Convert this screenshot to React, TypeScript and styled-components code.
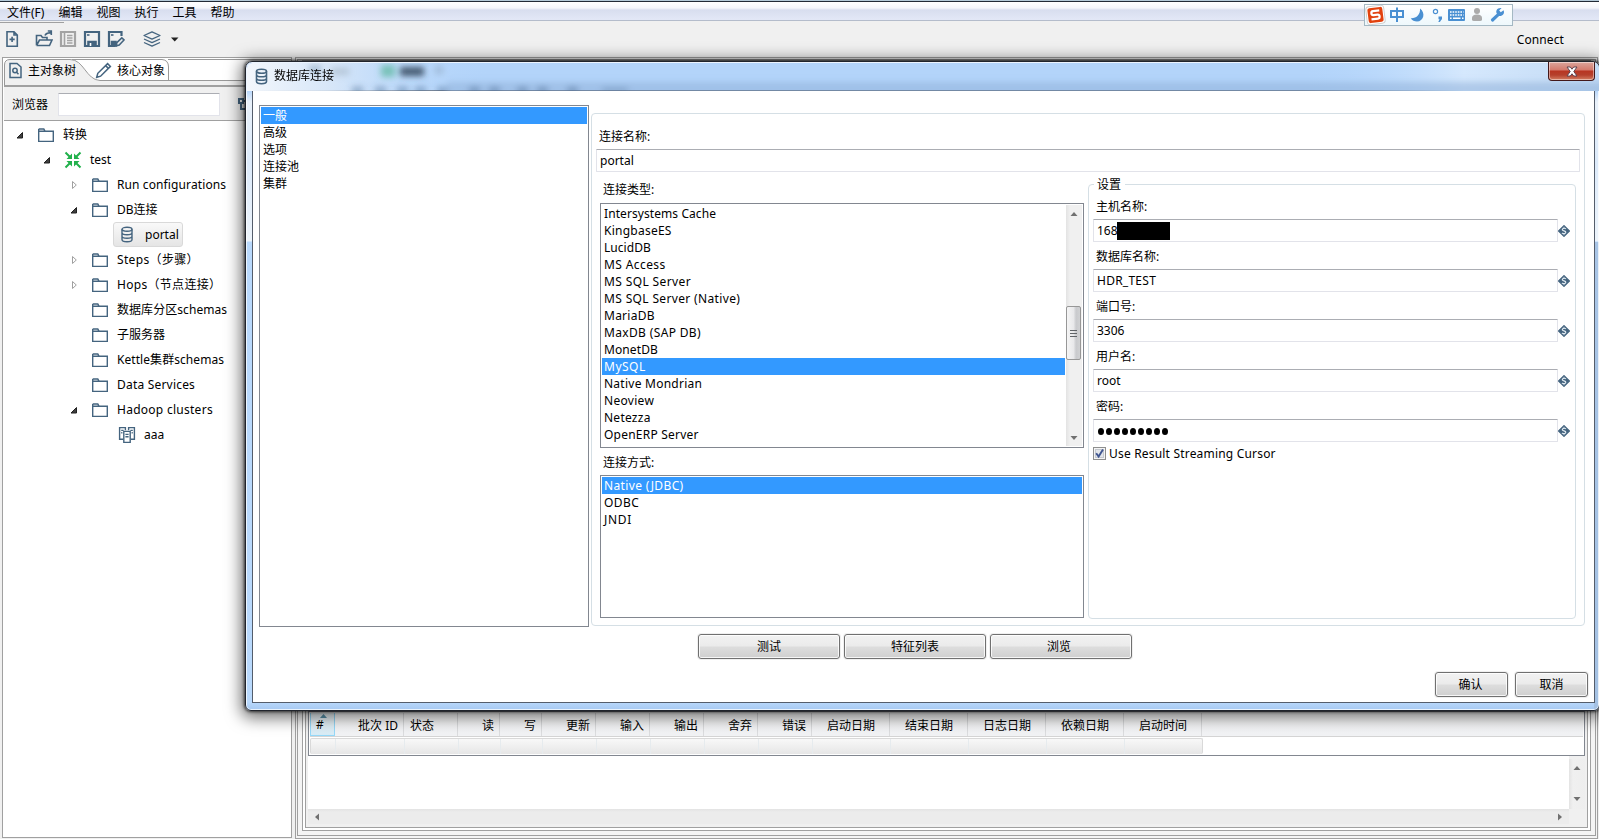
import React from "react";
import styled, { createGlobalStyle, css } from "styled-components";

const GlobalStyle = createGlobalStyle`
  * { box-sizing: border-box; }
  html, body { margin: 0; padding: 0; overflow: hidden; }
  body {
    font-family: "Noto Sans", "Noto Sans CJK SC", sans-serif;
    font-size: 12px;
    line-height: 17px;
    color: #000;
    white-space: nowrap;
  }
`;

const INK = "#44647f";

/* ---------- application window ---------- */

const Window = styled.div`
  position: relative;
  width: 1599px;
  height: 839px;
  display: flex;
  flex-direction: column;
  background: #f0f0f0;
  overflow: hidden;
`;

const TitleEdge = styled.div`
  height: 2px;
  flex: none;
  background: linear-gradient(#b4cad8 0 1px, #222b36 1px 2px);
`;

const MenuBar = styled.nav`
  height: 19px;
  flex: none;
  display: flex;
  align-items: center;
  gap: 14px;
  padding: 2px 0 0 7px;
  background: linear-gradient(#fff 0, #f4f6fb 6px, #d8deef 8px, #e2e7f6 17px);
  border-bottom: 1px solid #b4bccb;
`;

const Toolbar = styled.div`
  height: 36px;
  flex: none;
  display: flex;
  align-items: center;
  padding: 0 35px 0 5px;
  background: linear-gradient(90deg, #a0a0a0 64px, transparent 64px) 0 1px / 100% 1px no-repeat, #f0f0f0;
`;

const ToolIcon = styled.svg<{ $gap: number }>`
  width: 18px;
  height: 18px;
  flex: none;
  margin-left: ${(p) => p.$gap}px;
  fill: none;
  stroke: ${INK};
  stroke-width: 1.6;
`;

const Connect = styled.span`
  margin-left: auto;
  letter-spacing: 0.1px;
`;

const Workspace = styled.div`
  flex: 1;
  min-height: 0;
  display: flex;
  gap: 3px;
  padding: 0 1px 0 2px;
`;

/* ---------- explorer ---------- */

const Explorer = styled.aside`
  width: 290px;
  flex: none;
  margin-bottom: 1px;
  display: flex;
  flex-direction: column;
  border: 1px solid #a0a0a0;
  background: #fff;
`;

const TabStrip = styled.div`
  position: relative;
  height: 29px;
  flex: none;
  margin-left: 1px;
  background: #fff;
`;

const TabShape = styled.svg`
  position: absolute;
  inset: 0;
  width: 287px;
  height: 29px;
`;

const TabLabels = styled.div`
  position: relative;
  display: flex;
  align-items: center;
  height: 24px;
  padding-left: 4px;
`;

const TabLabel = styled.span<{ $w: number }>`
  width: ${(p) => p.$w}px;
  display: flex;
  align-items: center;
  gap: 5px;
  svg { width: 15px; height: 17px; flex: none; }
`;

const SearchRow = styled.div`
  height: 34px;
  flex: none;
  margin-left: 1px;
  display: flex;
  align-items: center;
  padding: 2px 0 0 8px;
  background: #f0f0f0;
  border-bottom: 1px solid #a0a0a0;
`;

const SearchField = styled.div`
  width: 162px;
  height: 23px;
  margin: 0 18px 0 10px;
  background: #fff;
  border: 1px solid #e2e3ea;
  border-top-color: #abadb3;
  border-radius: 1px;
`;

const Tree = styled.div`
  flex: 1;
  padding-top: 1px;
`;

const Row = styled.div<{ $level: number }>`
  height: 25px;
  display: flex;
  align-items: center;
  padding-left: ${(p) => 13 + p.$level * 27}px;
`;

const Twist = styled.svg`
  width: 8px;
  height: 8px;
  flex: none;
`;

const NodeIcon = styled.svg`
  width: 18px;
  height: 18px;
  flex: none;
  margin: 0 8px 0 13px;
  fill: none;
  stroke: ${INK};
  stroke-width: 1.4;
`;

const NodeLabel = styled.span<{ $picked?: boolean; $child?: boolean; $track?: number }>`
  display: flex;
  align-items: center;
  letter-spacing: ${(p) => p.$track ?? 0}px;
  ${(p) => p.$child && css`margin-left: 27px;`}
  ${(p) =>
    p.$picked &&
    css`
      margin-left: 35px;
      height: 25px;
      padding-right: 3px;
      border: 1px solid #d9d9d9;
      border-radius: 3px;
      background: linear-gradient(#f9f9f9, #e5e5e5);
      ${NodeIcon} { margin: 0 9px 0 4px; }
    `}
`;

/* ---------- results panel ---------- */

const Results = styled.section`
  flex: 1;
  min-width: 0;
  display: flex;
  border: 1px solid #a0a0a0;
  padding: 1px 1px 2px;
  background: #f4f4f4;
`;

const Ring1 = styled.div`
  flex: 1;
  min-width: 0;
  display: flex;
  padding: 0 4px 4px;
  border: 1px solid #a0a0a0;
  background: #f4f4f4;
`;

const Ring2 = styled.div`
  flex: 1;
  min-width: 0;
  display: flex;
  padding: 0 2px 2px;
  border: 1px solid #a0a0a0;
  background: #fff;
`;

const Ring3 = styled.div`
  flex: 1;
  min-width: 0;
  display: flex;
  flex-direction: column;
  padding: 649px 2px 2px;
  border: 1px solid #a0a0a0;
  background: #f0f0f0;
`;

const Grid = styled.div`
  height: 45px;
  flex: none;
  padding: 1px;
  border: 1px solid #828790;
  background: #fff;
`;

const HeadRow = styled.div`
  display: flex;
  height: 24px;
  background: linear-gradient(#fff, #f2f3f5 20px);
  border-bottom: 1px solid #d5d5d5;
`;

const HeadCell = styled.div<{ $w: number; $align: string; $sorted?: boolean }>`
  position: relative;
  width: ${(p) => p.$w}px;
  flex: none;
  padding: 4px 5px 0 6px;
  text-align: ${(p) => p.$align};
  border-right: 1px solid #dcdddf;
  ${(p) =>
    p.$sorted &&
    css`
      padding-top: 3px;
      padding-left: 5px;
      border: 1px solid #96d9f9;
      border-top: 0;
      background: linear-gradient(#f2f9fc, #d8ecf6);
    `}
`;

const SortMark = styled.svg`
  position: absolute;
  left: 9px;
  top: 1px;
  width: 7px;
  height: 4px;
`;

const BlankRow = styled.div`
  display: flex;
  width: 893px;
  height: 16px;
  margin-top: 1px;
  border: 1px solid #d9d9d9;
  border-bottom: 0;
  border-radius: 2px;
  background: linear-gradient(#f8f8f8, #e6e6e6);
`;

const BlankCell = styled.div<{ $w: number }>`
  width: ${(p) => p.$w}px;
  flex: none;
  border-right: 1px solid #e6ebee;
`;

const LogArea = styled.div`
  height: 70px;
  display: grid;
  grid-template-columns: 1fr 16px;
  grid-template-rows: 53px 15px;
`;

const LogText = styled.div`
  background: #fff;
`;

const Track = styled.div<{ $horizontal?: boolean }>`
  display: flex;
  flex-direction: ${(p) => (p.$horizontal ? "row" : "column")};
  justify-content: space-between;
  align-items: center;
  padding: ${(p) => (p.$horizontal ? "0 5px" : "5px 0 6px")};
  background: ${(p) => (p.$horizontal ? "linear-gradient(#e3e3e3,#ececec 3px,#ececec)" : "linear-gradient(90deg,#e3e3e3,#f0f0f0 4px,#eee)")};
  margin-top: ${(p) => (p.$horizontal ? 0 : "3px")};
`;

/* ---------- input method bar ---------- */

const ImeBar = styled.div`
  position: absolute;
  left: 1364px;
  top: 4px;
  width: 149px;
  height: 22px;
  border: 1px solid #a4b8c3;
  background: linear-gradient(#fff, #eef8fc);
  svg { display: block; }
`;

/* ---------- dialog ---------- */

const Dialog = styled.div`
  position: absolute;
  left: 245px;
  top: 61px;
  width: 1355px;
  height: 650px;
  display: flex;
  flex-direction: column;
  padding: 0 4px 7px 6px;
  border: 1px solid #20242c;
  border-radius: 7px 7px 6px 6px;
  background:
    linear-gradient(#a9c5e6, #a3c0e2) 100% 180px / 5px 100% no-repeat,
    linear-gradient(#b3d4fa 0, #b3d4fa 28px, #e9f1fa 40px, #dceafa 100px, #edf4fb 179px, #b9d9fc 180px, #b9d9fc 640px, #a6c8f0 648px);
  box-shadow: inset 0 0 0 1px rgba(255, 255, 255, 0.75), 0 0 3px 1px rgba(0, 0, 0, 0.65), 0 3px 16px 4px rgba(0, 0, 0, 0.55);
`;

const Glass = styled.svg`
  position: absolute;
  left: 1px;
  top: 1px;
  width: 1352px;
  height: 28px;
`;

const TitleBar = styled.header`
  position: relative;
  height: 28px;
  flex: none;
  display: flex;
  align-items: center;
  padding-left: 3px;
  gap: 6px;
  span { padding-bottom: 2px; }
  svg { width: 13px; height: 17px; fill: none; stroke: ${INK}; stroke-width: 1.6; }
`;

const CloseButton = styled.div`
  align-self: flex-start;
  margin-left: auto;
  width: 47px;
  height: 19px;
  display: flex;
  align-items: center;
  justify-content: center;
  border: 1px solid #43181a;
  border-top: 0;
  border-radius: 0 0 4px 4px;
  background: linear-gradient(#dba59c 0, #d3796c 8px, #b83522 9px, #b5402c 13px, #da8a6d 19px);
  box-shadow: inset 0 0 0 1px rgba(255, 255, 255, 0.45);
`;

const Client = styled.div`
  flex: 1;
  min-height: 0;
  display: flex;
  flex-direction: column;
  padding: 14px 6px 6px 6px;
  border: 1px solid #545d6b;
  background: #fff;
`;

const Columns = styled.div`
  display: flex;
  gap: 2px;
  height: 522px;
`;

const ListBox = styled.div<{ $w: number; $h: number }>`
  width: ${(p) => p.$w}px;
  height: ${(p) => p.$h}px;
  flex: none;
  display: flex;
  padding: 1px;
  border: 1px solid #828790;
  background: #fff;
`;

const Options = styled.div`
  flex: 1;
  min-width: 0;
`;

const Option = styled.div<{ $on?: boolean; $track?: number }>`
  height: 17px;
  padding-left: 2px;
  line-height: 17px;
  letter-spacing: ${(p) => p.$track ?? 0}px;
  color: ${(p) => (p.$on ? "#fff" : "#000")};
  background: ${(p) => (p.$on ? "#3399ff" : "transparent")};
`;

const ScrollBar = styled.div`
  width: 17px;
  flex: none;
  display: flex;
  flex-direction: column;
  align-items: center;
  padding: 5px 0 4px;
  background: linear-gradient(90deg, #fff 1px, #e3e3e3 1px, #f0f0f0 5px, #f0f0f0);
`;

const Thumb = styled.div`
  width: 15px;
  height: 54px;
  margin: 88px 0 auto;
  display: flex;
  align-items: center;
  justify-content: center;
  border: 1px solid #979797;
  border-radius: 2px;
  background: linear-gradient(90deg, #f5f5f5, #e9e9eb 50%, #c9cacd 70%, #d0d1d3);
`;

const Group = styled.div`
  width: 994px;
  height: 513px;
  margin-top: 8px;
  padding: 14px 4px 0;
  border: 1px solid #d5dfe5;
  border-radius: 4px;
`;

const FieldLabel = styled.div`
  height: 17px;
  padding-left: 3px;
`;

const Field = styled.div<{ $w: number; $track?: number }>`
  position: relative;
  width: ${(p) => p.$w}px;
  height: 23px;
  flex: none;
  padding: 2px 0 0 3px;
  letter-spacing: ${(p) => p.$track ?? 0}px;
  border: 1px solid #e2e3ea;
  border-top-color: #abadb3;
  border-radius: 1px;
  background: #fff;
`;

const Halves = styled.div`
  display: flex;
  gap: 4px;
  margin-top: 9px;
`;

const Left = styled.div`
  width: 488px;
  padding-left: 4px;
  flex: none;
`;

const Settings = styled.div`
  width: 488px;
  height: 435px;
  margin-top: 3px;
  padding: 0 4px;
  border: 1px solid #d5dfe5;
  border-radius: 4px;
`;

const Legend = styled.div`
  width: 31px;
  height: 17px;
  margin: -9px 0 5px 1px;
  padding-left: 3px;
  background: #fff;
`;

const FieldBlock = styled.div`
  height: 50px;
`;

const FieldLine = styled.div`
  display: flex;
  align-items: center;
  margin-top: 4px;
`;

const Redaction = styled.span`
  position: absolute;
  left: 23px;
  top: 2px;
  width: 53px;
  height: 18px;
  background: #000;
`;

const Dots = styled.span`
  display: flex;
  gap: 2px;
  padding: 6px 0 0 1px;
  i { width: 6px; height: 7px; border-radius: 50%; background: #000; }
`;

const CheckLine = styled.div`
  display: flex;
  align-items: center;
  gap: 3px;
  margin-top: -3px;
  letter-spacing: 0.19px;
  svg { width: 13px; height: 13px; }
`;

const Buttons = styled.div<{ $end?: boolean }>`
  display: flex;
  justify-content: ${(p) => (p.$end ? "flex-end" : "flex-start")};
  gap: ${(p) => (p.$end ? 7 : 4)}px;
  padding-left: ${(p) => (p.$end ? 0 : 439)}px;
  margin-top: ${(p) => (p.$end ? 13 : 7)}px;
`;

const Button = styled.div<{ $w: number; $pull?: number }>`
  width: ${(p) => p.$w}px;
  height: 25px;
  display: flex;
  align-items: center;
  justify-content: center;
  padding-right: ${(p) => p.$pull ?? 0}px;
  border: 1px solid #707070;
  border-radius: 3px;
  background: linear-gradient(#f2f2f2 0, #ebebeb 11px, #dddddd 12px, #cfcfcf 100%);
  box-shadow: inset 0 0 0 1px rgba(255, 255, 255, 0.8), 0 0 0 1px #f0f0f0;
`;

/* ---------- glyphs ---------- */

const Database = () => (
  <>
    <ellipse cx="6.5" cy="3.2" rx="5" ry="2" />
    <path d="M1.5 3.2v10.3c0 1.2 2.2 2.2 5 2.2s5-1 5-2.2V3.2M1.5 6.8c0 1.1 2.2 2 5 2s5-.9 5-2M1.5 10.2c0 1.1 2.2 2 5 2s5-.9 5-2" />
  </>
);

const FolderGlyph = () => <path d="M1.7 3V15.4H16.3V5.2H8L6.8 3H1.7M1.7 5.2H8" />;

const TransGlyph = () => (
  <g stroke="#22b14c" strokeWidth="2">
    <path d="M1.5 1.5l5 5M16.5 1.5l-5 5M1.500 16.500l5-5M16.500 16.500l-5-5" />
    <path d="M2.500 8H8V2.500ZM15.500 8H10V2.500ZM2.500 10H8V15.500ZM15.500 10H10V15.500Z" fill="#22b14c" stroke="none" />
  </g>
);

const ClusterGlyph = () => (
  <g>
    <path d="M5.4 13.2H1.6V1.6H7.4V4.2M12.6 13.2H16.4V1.6H10.6V4.2M3.2 4.4H5.6M12.4 4.4H14.8M3.2 6.8H4.4M13.6 6.8H14.8" />
    <path d="M5.8 5.4H12.2V16.4H5.8ZM7.4 8.4H10.6M7.4 10.8H10.6" fill="#fff" />
  </g>
);

const Arrow = ({ dir }: { dir: "up" | "down" | "left" | "right" }) => {
  const d = {
    up: "M.5 6L4 2L7.5 6Z",
    down: "M.5 2L4 6L7.5 2Z",
    left: "M6 .5L2 4L6 7.5Z",
    right: "M2 .5L6 4L2 7.5Z",
  }[dir];
  return (
    <svg width="8" height="8" viewBox="0 0 8 8">
      <path d={d} fill="#707070" />
    </svg>
  );
};

const VariableMark = () => (
  <svg width="12" height="12" viewBox="0 0 12 12">
    <path d="M6 .6L11.400 6L6 11.400L.6 6Z" fill={INK} stroke={INK} strokeWidth="1.200" strokeLinejoin="round" />
    <path d="M7.900 3.900C6.800 2.900 4.200 3.100 4.300 4.600C4.400 6.200 7.800 5.600 7.800 7.300C7.800 8.900 5.100 9 4 8" fill="none" stroke="#dfe8ef" strokeWidth="1.200" />
    <path d="M6 1.800V3.200M6 8.800V10.200" stroke="#dfe8ef" strokeWidth=".8" />
  </svg>
);

/* ---------- data ---------- */

type TreeNode = {
  level: number;
  label: string;
  icon: "folder" | "trans" | "db" | "cluster";
  state: "open" | "closed" | "leaf";
  track?: number;
};

const tree: TreeNode[] = [
  { level: 0, label: "转换", icon: "folder", state: "open" },
  { level: 1, label: "test", icon: "trans", state: "open" },
  { level: 2, label: "Run configurations", icon: "folder", state: "closed", track: 0.11 },
  { level: 2, label: "DB连接", icon: "folder", state: "open" },
  { level: 3, label: "portal", icon: "db", state: "leaf" },
  { level: 2, label: "Steps（步骤）", icon: "folder", state: "closed", track: 0.35 },
  { level: 2, label: "Hops（节点连接）", icon: "folder", state: "closed", track: 0.3 },
  { level: 2, label: "数据库分区schemas", icon: "folder", state: "leaf", track: 0.06 },
  { level: 2, label: "子服务器", icon: "folder", state: "leaf" },
  { level: 2, label: "Kettle集群schemas", icon: "folder", state: "leaf", track: 0.06 },
  { level: 2, label: "Data Services", icon: "folder", state: "leaf", track: 0.2 },
  { level: 2, label: "Hadoop clusters", icon: "folder", state: "open", track: 0.27 },
  { level: 3, label: "aaa", icon: "cluster", state: "leaf" },
];

const columns: [string, number, string][] = [
  ["#", 25, "left"],
  ["批次 ID", 69, "right"],
  ["状态", 54, "left"],
  ["读", 42, "right"],
  ["写", 42, "right"],
  ["更新", 54, "right"],
  ["输入", 54, "right"],
  ["输出", 54, "right"],
  ["舍弃", 54, "right"],
  ["错误", 54, "right"],
  ["启动日期", 78, "center"],
  ["结束日期", 78, "center"],
  ["日志日期", 78, "center"],
  ["依赖日期", 78, "center"],
  ["启动时间", 78, "center"],
];

const sections = ["一般", "高级", "选项", "连接池", "集群"];

const databases: [string, number][] = [
  ["Intersystems Cache", 0.08],
  ["KingbaseES", 0.25],
  ["LucidDB", 0.05],
  ["MS Access", 0.4],
  ["MS SQL Server", 0.38],
  ["MS SQL Server (Native)", 0.35],
  ["MariaDB", 0.25],
  ["MaxDB (SAP DB)", 0.35],
  ["MonetDB", 0.1],
  ["MySQL", 0.5],
  ["Native Mondrian", 0.25],
  ["Neoview", 0.3],
  ["Netezza", 0.25],
  ["OpenERP Server", 0.22],
];

const accessModes: [string, number][] = [
  ["Native (JDBC)", 0.35],
  ["ODBC", 0.4],
  ["JNDI", 0.7],
];

const settings: [string, React.ReactNode][] = [
  ["主机名称:", <>168<Redaction /></>],
  ["数据库名称:", "HDR_TEST"],
  ["端口号:", "3306"],
  ["用户名:", "root"],
  ["密码:", <Dots>{Array.from({ length: 9 }, (_, i) => <i key={i} />)}</Dots>],
];

const glyphs = { folder: FolderGlyph, trans: TransGlyph, db: Database, cluster: ClusterGlyph };

function TreeRow({ node }: { node: TreeNode }) {
  const Glyph = glyphs[node.icon];
  return (
    <Row $level={Math.min(node.level, 2)}>
      <Twist viewBox="0 0 8 8">
        {node.state === "open" && <path d="M6.5 1.5V7H1Z" fill="#404040" stroke="#202020" />}
        {node.state === "closed" && <path d="M2.5 .5L6.3 4L2.5 7.5Z" fill="#fff" stroke="#a0a0a0" />}
      </Twist>
      <NodeLabel $picked={node.icon === "db"} $child={node.level === 3} $track={node.track}>
        <NodeIcon viewBox={node.icon === "db" ? "-2.5 0 18 18" : "0 0 18 18"}>
          <Glyph />
        </NodeIcon>
        {node.label}
      </NodeLabel>
    </Row>
  );
}

function MainToolbar() {
  return (
    <Toolbar>
      <ToolIcon $gap={0} viewBox="0 0 18 18">
        <path d="M2 1.800H9L12.300 5V16.200H2ZM9 2V5H12M7.100 6.800V12M4.500 9.400H9.700" />
      </ToolIcon>
      <ToolIcon $gap={12} viewBox="0 0 18 18">
        <path d="M1.500 15.500V5.500H6L7.500 7.500H12V10M1.500 15.500L4.500 10H17L14.500 15.500H1.500M10 5.500Q11 3 15.500 2.600M12.800 1H16.300V5" />
      </ToolIcon>
      <ToolIcon $gap={6} viewBox="0 0 18 18" style={{ stroke: "#a3a3a3" }}>
        <path d="M2 2H16V16H2Z" strokeWidth="2.200" />
        <path d="M5.500 2V16M8 5.500H13.500M8 8H13.500M8 10.500H13.500M8 13H13.500" />
      </ToolIcon>
      <ToolIcon $gap={6} viewBox="0 0 18 18">
        <path d="M2 2H16V16H2Z" strokeWidth="2.200" />
        <path d="M5 11.500H13V16H5Z" fill={INK} />
        <path d="M7.500 13V16" stroke="#fff" />
        <path d="M4 5H6.500" />
      </ToolIcon>
      <ToolIcon $gap={6} viewBox="0 0 18 18">
        <path d="M8 16H2V2H14.500V6" strokeWidth="2.200" />
        <path d="M4 5H6.500" />
        <path d="M4.500 11.500H9V16H4.500Z" fill={INK} />
        <path d="M9.300 15.800L9.800 12.600L14.800 7.800L17 10L12.200 15Z" fill="#f0f0f0" />
      </ToolIcon>
      <ToolIcon $gap={18} viewBox="0 0 18 18" strokeLinejoin="round">
        <path d="M9 1.800L17 5.500L9 9.200L1 5.500ZM1 9L9 12.700L17 9M1 12.500L9 16.200L17 12.500" strokeWidth="1.300" />
      </ToolIcon>
      <ToolIcon $gap={6} viewBox="0 0 18 18">
        <path d="M4 7.500H11.500L7.700 11.500Z" fill="#222" stroke="none" />
      </ToolIcon>
      <Connect>Connect</Connect>
    </Toolbar>
  );
}

function ExplorerPanel() {
  return (
    <Explorer>
      <TabStrip>
        <TabShape viewBox="0 0 287 29">
          <path d="M0 29V7Q0 2 5 2H66C80 2 82 22 96 22.5H287V29Z" fill="#f0f0f0" />
          <path d="M.5 29V7Q.5 1.5 6 1.5H66C80 1.5 82 22 96 22.5H287" fill="none" stroke="#999" />
          <path d="M68 1.5H158Q164.5 2 164.5 9V22M164 1.5H287" fill="none" stroke="#999" />
          <path d="M0 28H287" stroke="#a0a0a0" strokeWidth="2" />
        </TabShape>
        <TabLabels>
          <TabLabel $w={88}>
            <svg viewBox="0 0 15 17" fill="none" stroke={INK} strokeWidth="1.5">
              <path d="M2 1.500H9L13 5V15.500H2Z" />
              <circle cx="7" cy="8.500" r="2.200" />
              <path d="M8.600 10.200L10.500 12.200" />
            </svg>
            主对象树
          </TabLabel>
          <TabLabel $w={80}>
            <svg viewBox="0 0 15 17" fill="none" stroke={INK} strokeWidth="1.5" style={{ overflow: "visible", marginRight: 1 }}>
              <path d="M.7 15.300L1.800 11.300L11.600 1.600L14.400 4.400L4.600 14.200ZM9.600 3.600L12.400 6.400" />
            </svg>
            核心对象
          </TabLabel>
        </TabLabels>
      </TabStrip>
      <SearchRow>
        浏览器
        <SearchField />
        <svg width="16" height="16" viewBox="0 0 16 16" fill="none" stroke={INK} strokeWidth="2">
          <path d="M1 2H5V6H1ZM3 6V12H8M5 4H8" />
        </svg>
      </SearchRow>
      <Tree>
        {tree.map((n) => (
          <TreeRow key={n.label} node={n} />
        ))}
      </Tree>
    </Explorer>
  );
}

function ResultsPanel() {
  return (
    <Results>
      <Ring1>
        <Ring2>
          <Ring3>
            <Grid>
              <HeadRow>
                {columns.map(([label, w, align], i) => (
                  <HeadCell key={label} $w={w} $align={align} $sorted={i === 0}>
                    {i === 0 && (
                      <SortMark viewBox="0 0 7 4">
                        <path d="M0 4L3.5 0L7 4Z" fill="#5a93ac" />
                      </SortMark>
                    )}
                    {label}
                  </HeadCell>
                ))}
              </HeadRow>
              <BlankRow>
                {columns.slice(0, -1).map(([label, w]) => (
                  <BlankCell key={label} $w={w} />
                ))}
              </BlankRow>
            </Grid>
            <LogArea>
              <LogText />
              <Track>
                <Arrow dir="up" />
                <Arrow dir="down" />
              </Track>
              <Track $horizontal>
                <Arrow dir="left" />
                <Arrow dir="right" />
              </Track>
            </LogArea>
          </Ring3>
        </Ring2>
      </Ring1>
    </Results>
  );
}

function InputMethodBar() {
  return (
    <ImeBar>
      <svg width="147" height="20" viewBox="0 0 147 20">
        <g transform="rotate(-7 10.500 10)">
          <rect x="1.500" y="1" width="18" height="18" rx="3" fill="#fff" stroke="#d0d0d0" />
          <rect x="3" y="2.500" width="15" height="15" rx="2" fill="#e2420e" />
          <path d="M14.800 5.900H8.500Q6.600 5.900 6.600 7.900T8.500 9.900H12.500Q14.400 9.900 14.400 11.900T12.500 13.900H6" fill="none" stroke="#fff" strokeWidth="2.200" />
        </g>
        <path d="M26 6H38V12H26ZM32 2.500V17" fill="none" stroke="#4a90d2" strokeWidth="2" />
        <path d="M55 3.500C61 8 58.500 16.500 52 16.500C49.500 16.500 47 15.300 45.800 13.200C51.500 13.500 55.500 9.500 55 3.500Z" fill="#4a90d2" />
        <circle cx="70.500" cy="6.500" r="2.100" fill="none" stroke="#4a90d2" strokeWidth="1.200" />
        <path d="M73.500 11.500H77V14L74.800 17H73.300L74.500 14.200H73.500Z" fill="#4a90d2" />
        <rect x="83" y="4" width="17" height="12" rx="1" fill="#4a90d2" />
        <path d="M85 7H98.500M85 10H98.500" stroke="#fff" strokeWidth="1.500" strokeDasharray="1.600 1" />
        <path d="M85 13.300H86.600M88 13.300H95.500M97 13.300H98.500" stroke="#fff" strokeWidth="1.500" />
        <circle cx="112" cy="6" r="3" fill="#ababab" />
        <path d="M107 13Q107 9.500 112 9.500T117 13V14.500Q117 16 115 16H109Q107 16 107 14.500Z" fill="#ababab" />
        <path d="M127.500 15L134 8.800" stroke="#4a90d2" strokeWidth="3.200" strokeLinecap="round" />
        <path d="M138.600 5.200L135.800 7.300L134.200 5.500L136.600 3C132.500 2.200 130.300 5.500 131.800 8.500L134 11C137.500 11.500 140 8.500 138.600 5.200Z" fill="#4a90d2" />
      </svg>
    </ImeBar>
  );
}

function ConnectionDialog() {
  return (
    <Dialog>
      <Glass viewBox="0 0 1352 28">
        <defs>
          <filter id="soft" x="-20%" y="-100%" width="140%" height="300%">
            <feGaussianBlur stdDeviation="3.2" />
          </filter>
          <linearGradient id="light" x1="0" x2="1">
            <stop offset="0" stopColor="#f3f7fc" />
            <stop offset="0.06" stopColor="#dce9f8" stopOpacity="0.9" />
            <stop offset="0.18" stopColor="#b3d6fc" stopOpacity="0" />
            <stop offset="0.78" stopColor="#b3d6fc" stopOpacity="0" />
            <stop offset="0.9" stopColor="#d5e8fd" />
            <stop offset="1" stopColor="#c3dbf5" />
          </linearGradient>
        </defs>
        <path d="M0 28V6Q0 0 6 0H1346Q1352 0 1352 6V28Z" fill="url(#light)" />
        <g filter="url(#soft)">
          <rect x="200" y="19" width="1170" height="14" fill="#8fb1d8" opacity="0.55" />
          <rect x="62" y="2" width="12" height="9" fill="#7f9db8" opacity="0.5" />
          <rect x="84" y="5" width="18" height="7" fill="#9aa9ba" opacity="0.5" />
          <rect x="134" y="2" width="14" height="12" fill="#59b79c" opacity="0.7" />
          <rect x="153" y="4" width="24" height="9" fill="#2e4258" opacity="0.85" />
          <rect x="188" y="3" width="8" height="8" fill="#7f93aa" opacity="0.4" />
          {[105, 128, 150, 168, 190, 222, 242, 270, 290, 320].map((x) => (
            <rect key={x} x={x} y="24" width="11" height="6" fill="#456a92" opacity="0.5" />
          ))}
          <rect x="355" y="25" width="26" height="4" fill="#456a92" opacity="0.4" />
        </g>
      </Glass>
      <TitleBar>
        <svg viewBox="0 0 13 17">
          <Database />
        </svg>
        <span>数据库连接</span>
        <CloseButton>
          <svg style={{ width: 12, height: 11, strokeWidth: 1 }} viewBox="0 0 12 11">
            <path d="M1 1H4.300L6 3.200L7.700 1H11L7.800 5.500L11 10H7.700L6 7.800L4.300 10H1L4.200 5.500Z" fill="#fff" stroke="#5f4450" />
          </svg>
        </CloseButton>
      </TitleBar>
      <Client>
        <Columns>
          <ListBox $w={330} $h={522}>
            <Options>
              {sections.map((s, i) => (
                <Option key={s} $on={i === 0}>{s}</Option>
              ))}
            </Options>
          </ListBox>
          <Group>
            <FieldLabel>连接名称:</FieldLabel>
            <Field $w={984} style={{ marginTop: 4 }}>portal</Field>
            <Halves>
              <Left>
                <FieldLabel>连接类型:</FieldLabel>
                <ListBox $w={484} $h={245} style={{ marginTop: 5 }}>
                  <Options>
                    {databases.map(([d, track]) => (
                      <Option key={d} $on={d === "MySQL"} $track={track}>{d}</Option>
                    ))}
                  </Options>
                  <ScrollBar>
                    <Arrow dir="up" />
                    <Thumb>
                      <svg width="7" height="9" viewBox="0 0 7 9">
                        <path d="M0 1.500H7M0 4.500H7M0 7.500H7" stroke="#606468" />
                      </svg>
                    </Thumb>
                    <Arrow dir="down" />
                  </ScrollBar>
                </ListBox>
                <FieldLabel style={{ marginTop: 6 }}>连接方式:</FieldLabel>
                <ListBox $w={484} $h={143} style={{ marginTop: 4 }}>
                  <Options>
                    {accessModes.map(([d, track], i) => (
                      <Option key={d} $on={i === 0} $track={track}>{d}</Option>
                    ))}
                  </Options>
                </ListBox>
              </Left>
              <Settings>
                <Legend>设置</Legend>
                {settings.map(([label, value]) => (
                  <FieldBlock key={label}>
                    <FieldLabel>{label}</FieldLabel>
                    <FieldLine>
                      <Field $w={465} $track={value === "HDR_TEST" ? 0.25 : 0}>{value}</Field>
                      <VariableMark />
                    </FieldLine>
                  </FieldBlock>
                ))}
                <CheckLine>
                  <svg viewBox="0 0 13 13">
                    <rect x=".5" y=".5" width="12" height="12" fill="#f4f4f4" stroke="#8e8f8f" />
                    <rect x="2.500" y="2.500" width="8" height="8" fill="#e3e6ea" stroke="#c4c8cf" />
                    <path d="M3.200 6.200L5.600 9.500L10 2.500" fill="none" stroke="#3f5590" strokeWidth="1.900" />
                  </svg>
                  Use Result Streaming Cursor
                </CheckLine>
              </Settings>
            </Halves>
          </Group>
        </Columns>
        <Buttons>
          <Button $w={142}>测试</Button>
          <Button $w={142}>特征列表</Button>
          <Button $w={142} $pull={4}>浏览</Button>
        </Buttons>
        <Buttons $end>
          <Button $w={73} $pull={2}>确认</Button>
          <Button $w={73}>取消</Button>
        </Buttons>
      </Client>
    </Dialog>
  );
}

export default function App() {
  return (
    <Window>
      <GlobalStyle />
      <TitleEdge />
      <MenuBar>
        {["文件(F)", "编辑", "视图", "执行", "工具", "帮助"].map((m) => (
          <span key={m}>{m}</span>
        ))}
      </MenuBar>
      <MainToolbar />
      <Workspace>
        <ExplorerPanel />
        <ResultsPanel />
      </Workspace>
      <InputMethodBar />
      <ConnectionDialog />
    </Window>
  );
}
